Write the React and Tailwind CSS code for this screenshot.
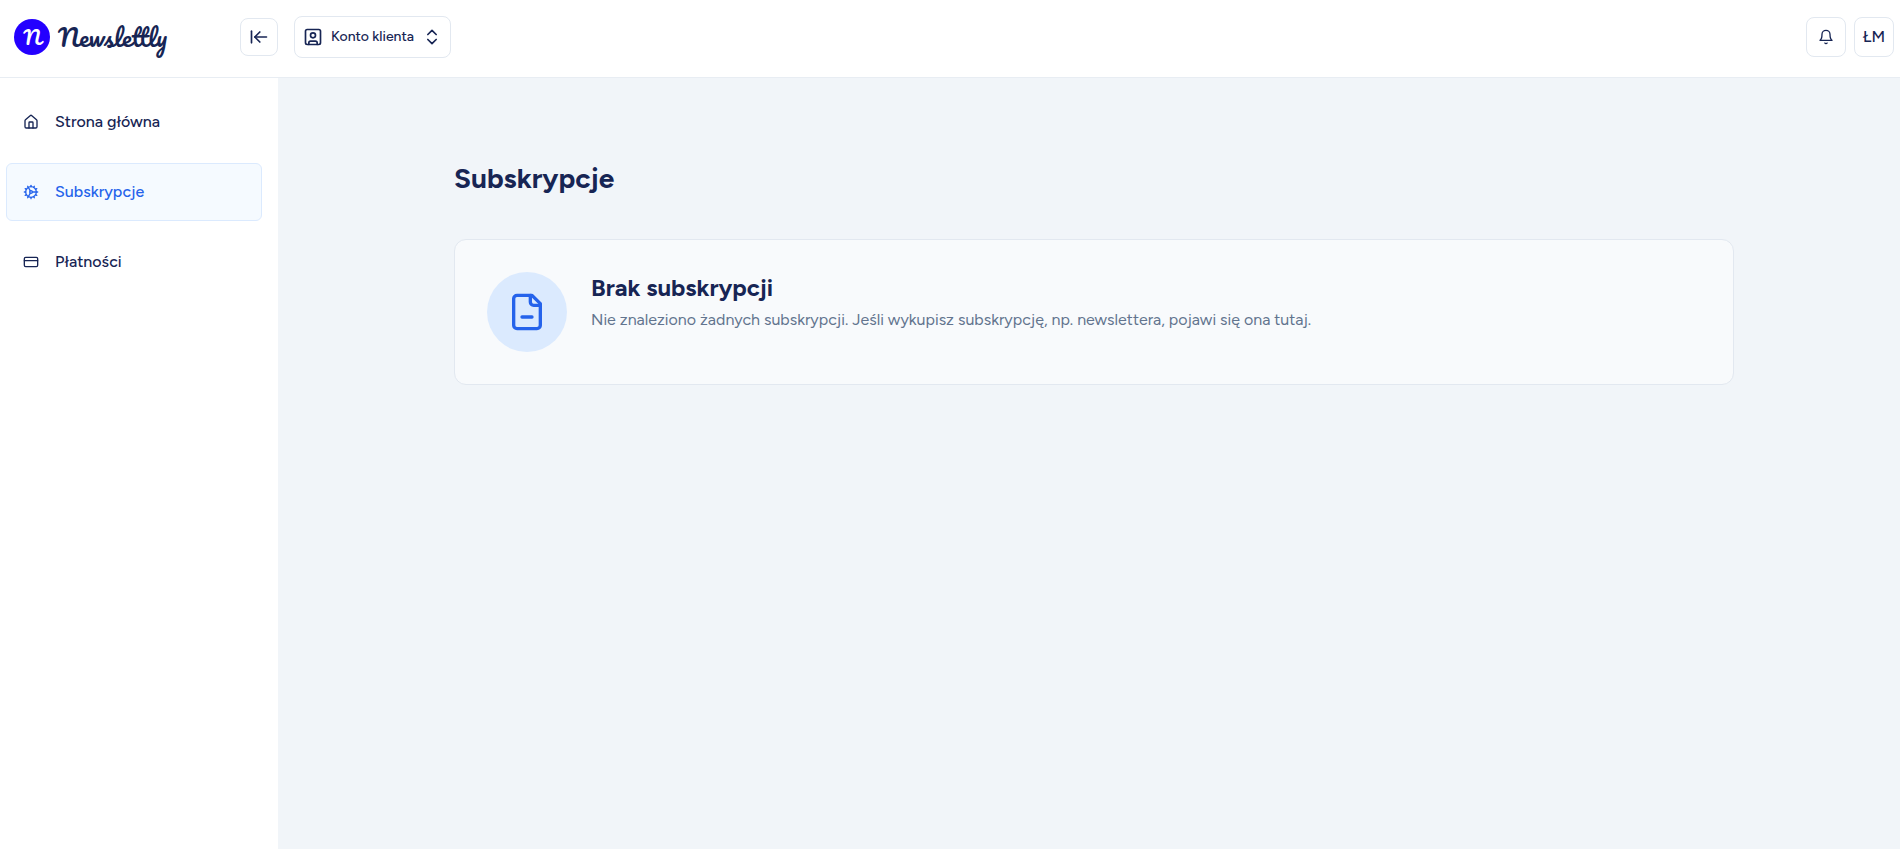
import { ArrowLeftToLine, ChevronsUpDown, Cog, CreditCard, House, SquareUser } from 'lucide-react';

const navItems = [
  { label: 'Strona główna', icon: House, active: false },
  { label: 'Subskrypcje', icon: Cog, active: true },
  { label: 'Płatności', icon: CreditCard, active: false },
];

function BellIcon() {
  return (
    <svg className="size-4" viewBox="0 0 24 24" fill="none" stroke="currentColor" strokeWidth="2" strokeLinecap="round" strokeLinejoin="round" aria-hidden="true">
      <path d="M6 8a6 6 0 0 1 12 0c0 7 3 9 3 9H3s3-2 3-9" />
      <path d="M10.3 21a1.94 1.94 0 0 0 3.4 0" />
    </svg>
  );
}

function FileMinusIcon() {
  return (
    <svg className="size-10" viewBox="0 0 24 24" fill="none" stroke="currentColor" strokeWidth="2" strokeLinecap="round" strokeLinejoin="round" aria-hidden="true">
      <path d="M15 2H6a2 2 0 0 0-2 2v16a2 2 0 0 0 2 2h12a2 2 0 0 0 2-2V7Z" />
      <path d="M14 2v4a2 2 0 0 0 2 2h4" />
      <path d="M9 15h6" />
    </svg>
  );
}

function Logo() {
  return (
    <a href="#" className="flex items-center gap-2 font-['Pacifico','Liberation_Serif',cursive]">
      <span className="flex size-9 items-center justify-center rounded-full bg-[#2400ff] text-xl leading-none text-white" aria-hidden="true">
        N
      </span>
      <span className="text-2xl leading-9">Newslettly</span>
    </a>
  );
}

function Header() {
  return (
    <header className="flex items-center border-b border-slate-200/80 bg-white pt-4 pr-1.5 pb-[19px]">
      <div className="flex w-[278px] items-center justify-between pl-3.5">
        <Logo />
        <button type="button" aria-label="Zwiń menu" className="flex size-[38px] items-center justify-center rounded-lg border border-slate-200">
          <ArrowLeftToLine className="size-5" />
        </button>
      </div>
      <button type="button" className="ml-4 flex h-[42px] items-center gap-2 rounded-lg border border-slate-200 px-2 text-sm font-medium">
        <SquareUser className="size-5" />
        Konto klienta
        <ChevronsUpDown className="size-5" />
      </button>
      <div className="ml-auto flex gap-2">
        <button type="button" aria-label="Powiadomienia" className="flex size-10 items-center justify-center rounded-lg border border-slate-200">
          <BellIcon />
        </button>
        <button type="button" className="flex size-10 items-center justify-center rounded-lg border border-slate-200 text-base font-medium">
          ŁM
        </button>
      </div>
    </header>
  );
}

function Sidebar() {
  return (
    <nav className="flex w-[278px] shrink-0 flex-col gap-3 bg-white pt-[15px] pr-4 pl-1.5">
      {navItems.map(({ label, icon: Icon, active }) => (
        <a
          key={label}
          href="#"
          aria-current={active ? 'page' : undefined}
          className={`flex h-[58px] items-center gap-4 rounded-md border px-4 text-base font-medium ${active ? 'border-blue-100 bg-[#f5faff] text-[#2563eb]' : 'border-transparent'}`}
        >
          <Icon className="size-4" />
          {label}
        </a>
      ))}
    </nav>
  );
}

export default function App() {
  return (
    <div className="flex min-h-screen flex-col font-['Figtree','Lato',sans-serif] text-[#172554]">
      <Header />
      <div className="flex grow">
        <Sidebar />
        <main className="grow bg-slate-100 pt-20 pl-2.5">
          <div className="mx-auto max-w-7xl">
            <h1 className="text-[28px] leading-10 font-bold">Subskrypcje</h1>
            <section className="mt-[41px] flex gap-6 rounded-xl border border-slate-200 bg-slate-50 p-8">
              <div className="flex size-20 shrink-0 items-center justify-center rounded-full bg-blue-100 text-[#2563eb]">
                <FileMinusIcon />
              </div>
              <div>
                <h2 className="text-2xl font-bold">Brak subskrypcji</h2>
                <p className="mt-1 text-base text-slate-500">
                  Nie znaleziono żadnych subskrypcji. Jeśli wykupisz subskrypcję, np. newslettera, pojawi się ona tutaj.
                </p>
              </div>
            </section>
          </div>
        </main>
      </div>
    </div>
  );
}
